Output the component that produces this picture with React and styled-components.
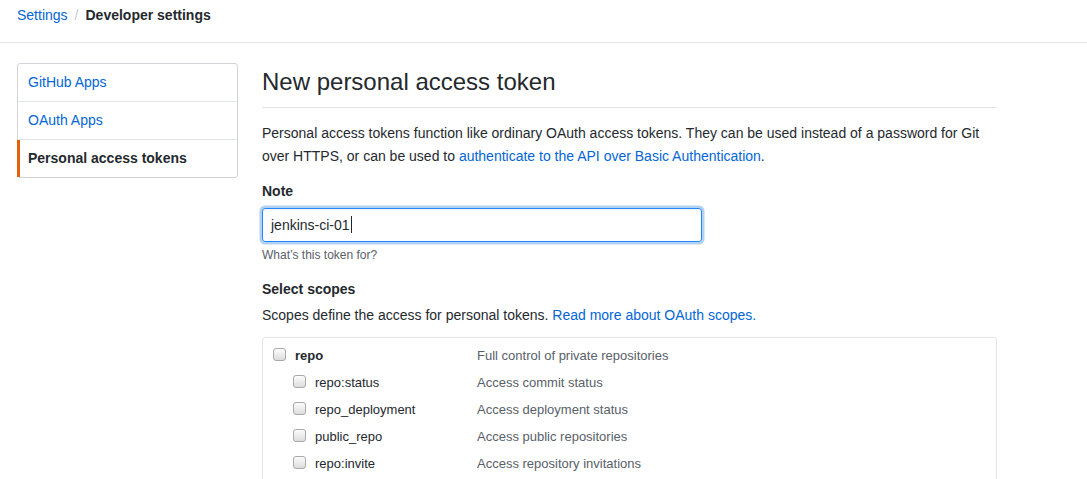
import styled, { createGlobalStyle } from "styled-components"

const GlobalStyle = createGlobalStyle`
  html, body {
    margin: 0;
    padding: 0;
    background: #fff;
  }
  body {
    font-family: "Liberation Sans", Arial, Helvetica, sans-serif;
    font-size: 14px;
    line-height: 1.5;
    color: #24292e;
  }
  * {
    box-sizing: border-box;
  }
`

const Header = styled.div`
  height: 43px;
  padding: 5px 17px 0;
  border-bottom: 1px solid #e1e4e8;
  line-height: 20px;
`

const Crumb = styled.a`
  color: #0366d6;
  text-decoration: none;
`

const Sep = styled.span`
  color: #c6cbd1;
  margin: 0 7px 0 7px;
`

const Current = styled.strong`
  color: #24292e;
  font-weight: bold;
`

const Container = styled.div`
  display: flex;
  gap: 24px;
  padding: 20px 17px 0;
  width: 1014px;
`

const Sidebar = styled.nav`
  width: 221px;
  flex-shrink: 0;
  align-self: flex-start;
  border: 1px solid #d1d5da;
  border-radius: 3px;
  background: #fff;
`

const MenuItem = styled.a`
  position: relative;
  display: block;
  padding: 8px 10px;
  line-height: 21px;
  color: ${p => (p.$selected ? "#24292e" : "#0366d6")};
  font-weight: ${p => (p.$selected ? "bold" : "normal")};
  text-decoration: none;
  border-bottom: 1px solid #e1e4e8;

  &:last-child {
    border-bottom: 0;
  }

  &::before {
    content: "";
    display: ${p => (p.$selected ? "block" : "none")};
    position: absolute;
    left: -1px;
    top: 0;
    bottom: 0;
    width: 3px;
    background: #e36209;
  }
`

const Main = styled.div`
  width: 735px;
`

const Subhead = styled.div`
  margin-top: 4px;
  padding-bottom: 10px;
  border-bottom: 1px solid #e1e4e8;
  margin-bottom: 13.5px;
`

const Title = styled.h2`
  margin: 0;
  font-size: 24px;
  font-weight: normal;
  line-height: 30px;
`

const Lead = styled.p`
  margin: 0;
  line-height: 23px;
`

const Link = styled.a`
  color: #0366d6;
  text-decoration: none;
`

const FormGroup = styled.div`
  margin-top: ${p => p.$top || 14}px;
`

const Label = styled.div`
  font-weight: bold;
  line-height: 21px;
  margin-bottom: ${p => p.$gap || 0}px;
`

const InputBox = styled.div`
  width: 440px;
  height: 34px;
  padding: 6px 8px;
  border: 1px solid #2188ff;
  border-radius: 3px;
  box-shadow: inset 0 1px 2px rgba(27, 31, 35, 0.075), 0 0 0 2.5px rgba(3, 102, 214, 0.3);
  font-size: 14px;
  line-height: 20px;
  display: flex;
  align-items: center;
`

const Caret = styled.span`
  display: inline-block;
  width: 1px;
  height: 17px;
  background: #24292e;
  margin-left: 1px;
`

const Note = styled.div`
  margin-top: 4px;
  font-size: 12px;
  line-height: 18px;
  color: #586069;
`

const ScopesText = styled.p`
  margin: 5px 0 0;
  line-height: 21px;
`

const ScopeTable = styled.div`
  margin-top: 11px;
  border: 1px solid #e1e4e8;
  border-radius: 3px;
  padding: 4px 10px 10px;
`

const Row = styled.div`
  display: grid;
  grid-template-columns: 204px 1fr;
  align-items: center;
  height: ${p => (p.$first ? 28 : 27)}px;
`

const ScopeName = styled.label`
  display: flex;
  align-items: center;
  gap: 9px;
  padding-left: ${p => (p.$child ? 20 : 0)}px;
  font-size: 13px;
  font-weight: ${p => (p.$child ? "normal" : "bold")};
  color: #24292e;
`

const Check = styled.span`
  display: inline-block;
  width: 13px;
  height: 13px;
  margin-top: -3px;
  border: 1px solid #a9a9a9;
  border-radius: 3px;
  background: linear-gradient(#fcfcfc, #dcdcdc);
`

const ScopeDesc = styled.span`
  font-size: 13px;
  color: #586069;
`

const scopes = [
  { name: "repo", desc: "Full control of private repositories" },
  { name: "repo:status", desc: "Access commit status", child: true },
  { name: "repo_deployment", desc: "Access deployment status", child: true },
  { name: "public_repo", desc: "Access public repositories", child: true },
  { name: "repo:invite", desc: "Access repository invitations", child: true },
  { name: "admin:org", desc: "Full control of orgs and teams" },
]

const App = () => {
  return (
    <>
      <GlobalStyle />
      <Header>
        <Crumb href="#">Settings</Crumb>
        <Sep>/</Sep>
        <Current>Developer settings</Current>
      </Header>
      <Container>
        <Sidebar>
          <MenuItem href="#">GitHub Apps</MenuItem>
          <MenuItem href="#">OAuth Apps</MenuItem>
          <MenuItem href="#" $selected>Personal access tokens</MenuItem>
        </Sidebar>
        <Main>
          <Subhead>
            <Title>New personal access token</Title>
          </Subhead>
          <Lead>
            Personal access tokens function like ordinary OAuth access tokens. They can be used instead of a password for Git
            over HTTPS, or can be used to <Link href="#">authenticate to the API over Basic Authentication</Link>.
          </Lead>
          <FormGroup $top={13}>
            <Label $gap={6}>Note</Label>
            <InputBox>
              jenkins-ci-01<Caret />
            </InputBox>
            <Note>What’s this token for?</Note>
          </FormGroup>
          <FormGroup $top={15}>
            <Label>Select scopes</Label>
            <ScopesText>
              Scopes define the access for personal tokens. <Link href="#">Read more about OAuth scopes.</Link>
            </ScopesText>
            <ScopeTable>
              {scopes.map((s, i) => (
                <Row key={s.name} $first={i === 0}>
                  <ScopeName $child={s.child}>
                    <Check />
                    {s.name}
                  </ScopeName>
                  <ScopeDesc>{s.desc}</ScopeDesc>
                </Row>
              ))}
            </ScopeTable>
          </FormGroup>
        </Main>
      </Container>
    </>
  )
}

export default App
